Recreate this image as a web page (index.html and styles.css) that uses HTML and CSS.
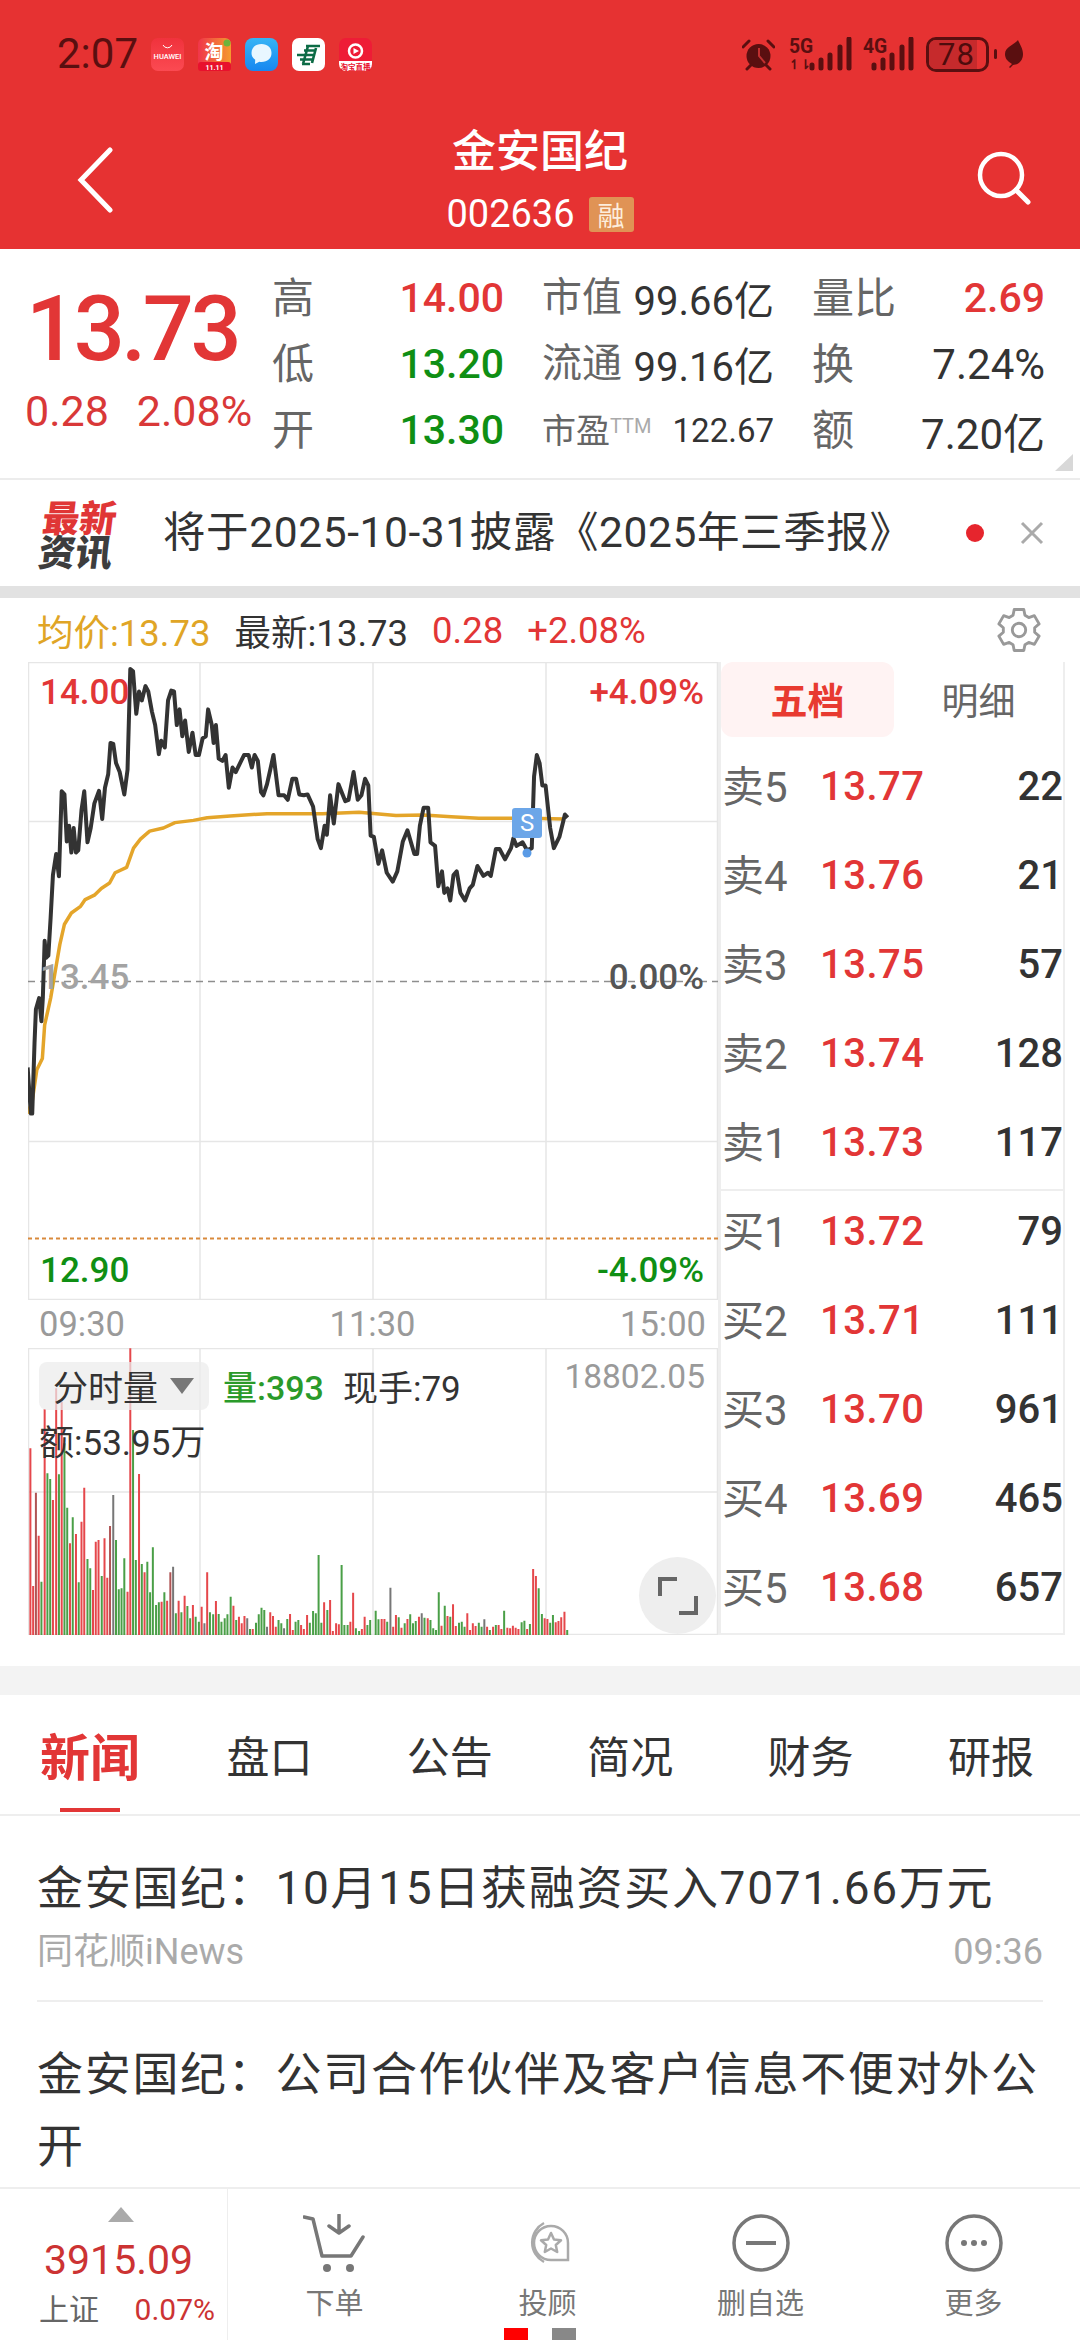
FILE: index.html
```html
<!DOCTYPE html>
<html lang="zh">
<head>
<meta charset="utf-8">
<title>金安国纪</title>
<link rel="stylesheet" href="styles.css">
</head>
<body>
<div class="screen">
  <header class="top">
    <div class="status">
      <span class="time">2:07</span>
      <div class="apps">
        <svg class="app" viewBox="0 0 33 33"><defs><linearGradient id="hw" x1="0" y1="0" x2="0" y2="1"><stop offset="0" stop-color="#f0323c"/><stop offset="1" stop-color="#fb4a52"/></linearGradient></defs><rect width="33" height="33" rx="7" fill="url(#hw)"/><path d="M12 7a5 5 0 0 0 9 0" fill="none" stroke="#fff" stroke-width="1"/><text x="16.5" y="21" class="app-t">HUAWEI</text></svg>
        <svg class="app" viewBox="0 0 33 33"><defs><linearGradient id="tb" x1="0" y1="0" x2="1" y2="0"><stop offset="0" stop-color="#f0354a"/><stop offset="1" stop-color="#f59a2e"/></linearGradient></defs><rect width="33" height="33" rx="6" fill="url(#tb)"/><rect y="24" width="33" height="9" rx="3" fill="#e8112d"/><circle cx="29" cy="5" r="3.5" fill="#6fb33a"/><text x="16" y="21" class="app-tao">淘</text><text x="16.5" y="32" class="app-n">11.11</text></svg>
        <svg class="app" viewBox="0 0 33 33"><defs><linearGradient id="ms" x1="0" y1="0" x2="0" y2="1"><stop offset="0" stop-color="#36b4f5"/><stop offset="1" stop-color="#1787f0"/></linearGradient></defs><rect width="33" height="33" rx="8" fill="url(#ms)"/><path d="M16.500 6c6 0 10 3.700 10 9s-4 9-10 9c-.8 0-1.500-.1-2.200-.2L10 26l.2-4.300C7.600 20 6.500 17.800 6.500 15c0-5.300 4-9 10-9z" fill="#e8f7ff"/></svg>
        <svg class="app" viewBox="0 0 33 33"><rect width="33" height="33" rx="7" fill="#fff"/><path d="M14 8h14M12 12.500h12M5 17h18M8 21.500h14M10 26h8M16 8l-5 18M24 10l-4 15" fill="none" stroke="#0c6b45" stroke-width="2.600"/></svg>
        <svg class="app" viewBox="0 0 33 33"><rect width="33" height="33" rx="7" fill="#ee1c36"/><path d="M0 23h33v3a7 7 0 0 1-7 7H7a7 7 0 0 1-7-7z" fill="#fff"/><circle cx="16.500" cy="13" r="6.500" fill="none" stroke="#fff" stroke-width="2.500"/><path d="M14.500 10l5.500 3-5.500 3z" fill="#fff"/><text x="16.500" y="31.500" class="app-z">淘宝直播</text></svg>
      </div>
      <div class="sys">
        <svg class="s-alarm" viewBox="0 0 33 33"><circle cx="16.500" cy="18" r="12" fill="#5a0f10"/><path d="M17 10v8l6 7" fill="none" stroke="#c03030" stroke-width="2"/><path d="M1 9l6-6M32 9l-6-6M5 31l4-4M28 31l-4-4" stroke="#5a0f10" stroke-width="3" stroke-linecap="round"/></svg>
        <div class="net">
          <svg class="bars" viewBox="0 0 43 34"><path d="M3 31v-3M12 31v-8M21 31V18M31 31V10M40 31V2" stroke="#5a0f10" stroke-width="5" stroke-linecap="round"/></svg>
          <span class="net-t">5G</span><span class="net-s">↿⇂</span>
        </div>
        <div class="net net-4">
          <svg class="bars" viewBox="0 0 43 34"><path d="M3 31v-3M12 31v-8M21 31V18M31 31V10M40 31V2" stroke="#5a0f10" stroke-width="5" stroke-linecap="round"/></svg>
          <span class="net-t">4G</span>
        </div>
        <div class="bat"><span class="bat-fill"></span><span class="bat-n">78</span></div>
        <span class="bat-tip"></span>
        <svg class="leaf" viewBox="0 0 18 28"><path d="M13 0C14 3 18 8 18 14c0 8-6 11-10 11l-3 3-1-1 3-3C2 21 0 18 0 14 0 7 9 5 13 0z" fill="#5a0f10"/></svg>
      </div>
    </div>
    <div class="nav">
      <div class="nav-side">
        <svg class="back" viewBox="0 0 36 66"><path d="M33 3L4 33l29 30" fill="none" stroke="#fff" stroke-width="5" stroke-linecap="round"/></svg>
      </div>
      <div class="nav-mid">
        <div class="title">金安国纪</div>
        <div class="code-row"><span class="code">002636</span><span class="rong">融</span></div>
      </div>
      <div class="nav-side nav-right">
        <svg class="search" viewBox="0 0 54 54"><circle cx="24" cy="24" r="21" fill="none" stroke="#fff" stroke-width="4.500"/><path d="M39 39l12 12" stroke="#fff" stroke-width="5" stroke-linecap="round"/></svg>
      </div>
    </div>
  </header>

  <section class="quote">
    <div class="last">
      <div class="last-price">13.73</div>
      <div class="last-chg"><span>0.28</span><span>2.08%</span></div>
    </div>
    <div class="stats">
      <div class="cell"><span class="k">高</span><b class="up">14.00</b></div>
      <div class="cell"><span class="k k2">市值</span><b class="dark">99.66亿</b></div>
      <div class="cell"><span class="k">量比</span><b class="up">2.69</b></div>
      <div class="cell"><span class="k">低</span><b class="down">13.20</b></div>
      <div class="cell"><span class="k k2">流通</span><b class="dark">99.16亿</b></div>
      <div class="cell"><span class="k">换</span><b class="dark wide">7.24%</b></div>
      <div class="cell"><span class="k">开</span><b class="down">13.30</b></div>
      <div class="cell"><span class="k k3">市盈<sup class="ttm">TTM</sup></span><b class="dark small">122.67</b></div>
      <div class="cell"><span class="k">额</span><b class="dark wide">7.20亿</b></div>
    </div>
    <span class="corner"></span>
  </section>

  <section class="ticker">
    <div class="tk-logo"><span class="tk-a">最新</span><span class="tk-b">资讯</span></div>
    <div class="tk-text">将于2025-10-31披露《2025年三季报》</div>
    <span class="tk-dot"></span>
    <svg class="tk-x" viewBox="0 0 24 24"><path d="M2 2l20 20M22 2L2 22" stroke="#aaa" stroke-width="3"/></svg>
  </section>
  <div class="band"></div>

  <div class="legend">
    <span class="avg">均价:13.73</span>
    <span class="cur">最新:13.73</span>
    <span class="up">0.28</span>
    <span class="up">+2.08%</span>
    <svg class="gear" viewBox="0 0 48 48"><path d="M17.800 8.700L19 2.600h10l1.200 6.100 3.950 2.300L40 9l5 8.600-4.650 4.100v4.600L45 30.400 40 39l-5.850-2-3.950 2.300L29 45.400H19l-1.200-6.100-3.950-2.300L8 39l-5-8.600 4.650-4.100v-4.600L3 17.600 8 9l5.850 2z" fill="none" stroke="#999" stroke-width="3" stroke-linejoin="round"/><circle cx="24" cy="24" r="7" fill="none" stroke="#999" stroke-width="3"/></svg>
  </div>

  <div class="market">
    <div class="charts">
      <div class="price-chart">
        <svg class="plot" viewBox="28 662 690 638" preserveAspectRatio="none">
          <path class="grid" d="M28 662.500H718M28 821.500H718M28 1141.500H718M28 1299.500H718M28.500 662V1300M200 662V1300M373 662V1300M546 662V1300M717.500 662V1300"/>
          <path class="dash" d="M28 981.500H718"/>
          <path class="limit" d="M28 1238.500H718"/>
          <g transform="translate(0 640) scale(.4604 .4476)">
            <polyline class="avgline" points="60,1058 70,1030 80,960 92,935 97,860 110,800 120,740 130,680 140,635 155,610 175,595 185,580 205,570 220,555 238,543 250,520 275,508 290,465 305,445 325,427 355,420 380,408 420,403 450,397 500,393 580,388 700,388 780,385 860,392 920,391 980,395 1040,398 1150,398 1225,400"/>
            <polyline class="priceline" points="60,955 67,1058 70,1058 75,900 78,825 85,800 90,852 93,800 97,672 100,710 105,705 110,620 115,525 122,478 128,528 134,338 140,345 145,450 150,415 155,475 160,420 165,475 170,470 177,380 183,338 190,452 197,420 205,365 215,337 222,400 228,330 235,300 240,230 246,232 252,275 260,295 270,345 277,290 283,65 289,70 296,165 302,115 308,135 316,103 322,115 330,160 337,190 345,255 350,225 358,240 365,135 372,113 378,115 384,190 390,155 396,215 402,180 410,250 418,207 425,257 432,257 440,220 447,215 452,155 460,190 464,230 469,190 475,265 483,270 490,257 497,330 505,285 512,295 530,257 540,257 547,285 553,257 560,270 567,340 572,347 580,322 587,290 594,257 605,347 617,347 625,357 635,310 643,310 650,345 660,347 668,345 680,372 690,445 697,465 705,415 710,435 717,347 725,410 735,322 750,360 757,357 768,295 777,357 785,347 793,310 800,325 805,437 812,440 822,500 830,470 840,520 853,540 863,517 875,450 885,425 900,478 906,478 912,415 920,375 930,375 935,452 945,460 952,550 960,517 965,565 972,555 978,582 985,525 992,517 1000,565 1010,582 1020,555 1027,547 1037,505 1050,527 1060,520 1066,527 1077,467 1085,467 1097,490 1110,465 1115,443 1122,460 1135,452 1145,470 1155,465 1160,305 1166,257 1172,275 1178,325 1185,325 1195,420 1203,465 1215,440 1227,390 1233,397"/>
          </g>
          <circle cx="527" cy="853" r="4.500" fill="#5a9be6"/>
        </svg>
        <span class="tag tag-l t1 up">14.00</span>
        <span class="tag tag-r t1 up">+4.09%</span>
        <span class="tag tag-l t2 mid">13.45</span>
        <span class="tag tag-r t2 mid2">0.00%</span>
        <span class="tag tag-l t3 down">12.90</span>
        <span class="tag tag-r t3 down">-4.09%</span>
        <span class="sflag">S</span>
      </div>
      <div class="axis"><span>09:30</span><span>11:30</span><span>15:00</span></div>
      <div class="vol-chart">
        <svg class="plot" viewBox="28 1348 690 287" preserveAspectRatio="none">
          <path class="grid" d="M28 1348.500H718M28 1492H718M28 1634.500H718M28.500 1348V1635M200 1348V1635M373 1348V1635M546 1348V1635M717.500 1348V1635"/>
          <g transform="translate(0 1330) scale(.4604 .3333)">
            <path class="b-r" d="M66 355V915M72 768V915M84 617V915M97 237V915M115 510V915M122 175V915M134 215V915M152 640V915M165 612V915M177 575V915M183 473V915M202 780V915M208 635V915M214 630V915M227 625V915M233 743V915M277 785V915M283 55V915M302 432V915M314 727V915M351 815V915M363 812V915M388 812V915M401 797V915M419 825V915M438 830V915M450 727V915M469 813V915M507 827V915M519 860V915M525 880V915M531 858V915M549 897V915M587 847V915M593 858V915M599 890V915M630 852V915M636 900V915M654 885V915M660 897V915M667 855V915M704 817V915M717 810V915M723 903V915M730 880V915M736 883V915M761 875V915M767 788V915M786 897V915M792 860V915M829 867V915M835 867V915M854 890V915M860 855V915M872 893V915M885 867V915M910 860V915M929 865V915M959 887V915M972 858V915M984 823V915M990 888V915M1015 850V915M1021 900V915M1027 880V915M1033 888V915M1058 890V915M1071 890V915M1083 885V915M1089 897V915M1102 893V915M1108 895V915M1114 887V915M1120 893V915M1126 897V915M1145 897V915M1158 717V915M1164 738V915M1183 865V915M1189 867V915M1207 877V915M1213 873V915M1219 862V915M1226 845V915"/>
            <path class="b-dr" d="M78 488V915M239 588V915M370 727V915"/>
            <path class="b-g" d="M90 755V915M103 430V915M109 447V915M128 433V915M140 340V915M146 533V915M158 562V915M171 757V915M190 687V915M196 715V915M221 738V915M252 630V915M258 778V915M264 775V915M270 685V915M289 300V915M295 690V915M308 702V915M320 695V915M326 787V915M332 652V915M339 825V915M345 817V915M357 787V915M382 850V915M394 847V915M407 828V915M413 865V915M425 860V915M432 875V915M456 847V915M463 853V915M475 852V915M481 875V915M488 865V915M494 853V915M501 800V915M513 870V915M543 897V915M556 878V915M562 853V915M568 833V915M574 840V915M605 870V915M611 880V915M624 867V915M642 875V915M648 870V915M673 878V915M680 843V915M686 850V915M692 675V915M698 878V915M711 840V915M742 705V915M748 885V915M755 885V915M773 895V915M780 903V915M798 885V915M804 870V915M816 842V915M822 868V915M841 875V915M866 862V915M879 880V915M891 853V915M897 880V915M903 873V915M922 863V915M935 870V915M941 895V915M947 900V915M953 787V915M966 827V915M978 860V915M997 878V915M1003 875V915M1009 890V915M1040 878V915M1046 890V915M1064 900V915M1077 885V915M1095 842V915M1133 877V915M1139 872V915M1151 882V915M1170 775V915M1177 852V915M1195 878V915M1201 855V915M1232 900V915"/>
            <path class="b-n" d="M246 495V915M376 710V915M444 880V915M537 865V915M580 890V915M617 895V915M848 773V915M916 850V915M1052 868V915"/>
          </g>
        </svg>
        <div class="vol-info">
          <div class="vol-line">
            <span class="sel">分时量<i class="sel-tri"></i></span>
            <span class="vol-g">量:393</span>
            <span class="vol-d">现手:79</span>
          </div>
          <div class="vol-amt">额:53.95万</div>
        </div>
        <span class="vol-max">18802.05</span>
        <span class="expand"><svg viewBox="0 0 40 40"><path d="M2 20V3h17M38 20v17H21" fill="none" stroke="#666" stroke-width="4"/></svg></span>
      </div>
    </div>

    <aside class="side">
      <div class="side-tabs"><span class="st-on">五档</span><span class="st-off">明细</span></div>
      <div class="levels">
        <div class="lv"><span class="lv-k">卖5</span><span class="lv-p">13.77</span><span class="lv-v">22</span></div>
        <div class="lv"><span class="lv-k">卖4</span><span class="lv-p">13.76</span><span class="lv-v">21</span></div>
        <div class="lv"><span class="lv-k">卖3</span><span class="lv-p">13.75</span><span class="lv-v">57</span></div>
        <div class="lv"><span class="lv-k">卖2</span><span class="lv-p">13.74</span><span class="lv-v">128</span></div>
        <div class="lv"><span class="lv-k">卖1</span><span class="lv-p">13.73</span><span class="lv-v">117</span></div>
      </div>
      <div class="levels levels-buy">
        <div class="lv"><span class="lv-k">买1</span><span class="lv-p">13.72</span><span class="lv-v">79</span></div>
        <div class="lv"><span class="lv-k">买2</span><span class="lv-p">13.71</span><span class="lv-v">111</span></div>
        <div class="lv"><span class="lv-k">买3</span><span class="lv-p">13.70</span><span class="lv-v">961</span></div>
        <div class="lv"><span class="lv-k">买4</span><span class="lv-p">13.69</span><span class="lv-v">465</span></div>
        <div class="lv"><span class="lv-k">买5</span><span class="lv-p">13.68</span><span class="lv-v">657</span></div>
      </div>
    </aside>
  </div>

  <nav class="tabs">
    <span class="tab tab-on">新闻</span>
    <span class="tab">盘口</span>
    <span class="tab">公告</span>
    <span class="tab">简况</span>
    <span class="tab">财务</span>
    <span class="tab">研报</span>
  </nav>

  <div class="feed">
    <article class="item">
      <h3 class="item-t">金安国纪&#65306;10月15日获融资买入7071.66万元</h3>
      <div class="item-m"><span>同花顺iNews</span><span>09:36</span></div>
    </article>
    <article class="item item-2">
      <h3 class="item-t">金安国纪&#65306;公司合作伙伴及客户信息不便对外公开</h3>
    </article>
  </div>

  <footer class="foot">
    <div class="idx">
      <i class="idx-tri"></i>
      <div class="idx-v">3915.09</div>
      <div class="idx-b"><span class="idx-n">上证</span><span class="idx-p">0.07%</span></div>
    </div>
    <div class="act">
      <svg class="act-i" viewBox="0 0 64 60"><path d="M1 3l9 2 9 37h29l12-19M36 1v18M26 12l10 7 10-7" fill="none" stroke="#777" stroke-width="3.500" stroke-linecap="round" stroke-linejoin="round"/><circle cx="24" cy="54" r="4" fill="#777"/><circle cx="47" cy="54" r="4" fill="#777"/></svg>
      <span>下单</span>
    </div>
    <div class="act">
      <svg class="act-i" viewBox="0 0 64 60"><path d="M35 12A17 17 0 0 0 35 46H52V29A17 17 0 0 0 35 12zM28 9A22 22 0 0 0 28 48" fill="none" stroke="#aaa" stroke-width="2.500"/><path d="M35 19l3 6.500 7 .8-5.200 4.700 1.400 7-6.200-3.500-6.200 3.500 1.400-7-5.200-4.700 7-.8z" fill="none" stroke="#aaa" stroke-width="2.500" stroke-linejoin="round"/></svg>
      <span>投顾</span>
    </div>
    <div class="act">
      <svg class="act-i" viewBox="0 0 64 60"><circle cx="32" cy="29" r="27" fill="none" stroke="#777" stroke-width="3.500"/><path d="M17 29h30" stroke="#777" stroke-width="4"/></svg>
      <span>删自选</span>
    </div>
    <div class="act">
      <svg class="act-i" viewBox="0 0 64 60"><circle cx="32" cy="29" r="27" fill="none" stroke="#777" stroke-width="3.500"/><circle cx="22" cy="29" r="3" fill="#777"/><circle cx="32" cy="29" r="3" fill="#777"/><circle cx="42" cy="29" r="3" fill="#777"/></svg>
      <span>更多</span>
    </div>
    <div class="pager"><i class="pg-on"></i><i class="pg-off"></i></div>
  </footer>
</div>
</body>
</html>
```
FILE: styles.css
```css
* { box-sizing: border-box; }
html, body { margin: 0; padding: 0; background: #fff; }
body { font-family: Roboto, "Noto Sans CJK SC", sans-serif; color: #333; }
.screen { width: 1080px; height: 2340px; display: flex; flex-direction: column; overflow: hidden; background: #fff; position: relative; }
.up { color: #e23636; }
.down { color: #0f8f14; }
.dark { color: #333; }

/* header */
.top { height: 249px; background: #e63232; flex: none; }
.status { height: 108px; display: flex; align-items: center; padding: 0 57px 0 57px; }
.time { font-size: 42px; color: #5a0f10; width: 94px; line-height: 1; }
.apps { display: flex; gap: 14px; }
.app { width: 33px; height: 33px; display: block; }
.app-t { font: 500 7.500px Roboto, sans-serif; fill: #fff; text-anchor: middle; }
.app-tao { font: 700 19px "Noto Sans CJK SC", sans-serif; fill: #fff; text-anchor: middle; }
.app-n { font: 700 7px Roboto, sans-serif; fill: #fff; text-anchor: middle; }
.app-z { font: 700 7.500px "Noto Sans CJK SC", sans-serif; fill: #e8112d; text-anchor: middle; }
.sys { margin-left: auto; display: flex; align-items: center; }
.s-alarm { width: 33px; height: 33px; display: block; margin-right: 14px; }
.net { width: 63px; height: 34px; position: relative; margin-right: 11px; }
.net-4 { width: 51px; margin-right: 12px; }
.net-t { position: absolute; left: 0; top: -1px; font: 700 21px/20px Roboto, sans-serif; color: #5a0f10; transform: scaleX(.92); transform-origin: left; }
.net-s { position: absolute; left: 0; top: 20px; font: 700 13px/15px Roboto, sans-serif; color: #5a0f10; }
.bars { position: absolute; right: 0; top: 0; width: 43px; height: 34px; }
.bat { width: 63px; height: 35px; border: 3px solid #5a0f10; border-radius: 10px; position: relative; display: flex; align-items: center; justify-content: center; overflow: hidden; }
.bat-fill { position: absolute; left: 0; top: 0; bottom: 0; width: 48px; background: #c62a2c; }
.bat-n { position: relative; font-size: 31px; line-height: 1; color: #4d0c0d; margin-right: 2px; letter-spacing: 1px; }
.bat-tip { width: 3px; height: 10px; background: #5a0f10; border-radius: 2px; margin: 0 8px 0 5px; }
.leaf { width: 18px; height: 28px; display: block; }

.nav { height: 141px; display: flex; }
.nav-side { width: 440px; flex: none; padding: 39px 0 0 77px; }
.nav-right { padding: 43px 49px 0 0; display: flex; justify-content: flex-end; }
.back { width: 36px; height: 66px; display: block; }
.search { width: 54px; height: 54px; display: block; }
.nav-mid { width: 200px; display: flex; flex-direction: column; align-items: center; }
.title { font: 500 44px/62px "Noto Sans CJK SC", sans-serif; color: #fff; margin-top: 9px; white-space: nowrap; }
.code-row { display: flex; align-items: center; gap: 14px; margin-top: 17px; white-space: nowrap; }
.code { font-size: 38px; line-height: 36px; color: #fff; }
.rong { width: 45px; height: 35px; background: #e09355; border-radius: 3px; color: #fdeedd; font: 400 27px/35px "Noto Sans CJK SC", sans-serif; text-align: center; }

/* quote */
.quote { height: 229px; display: flex; position: relative; flex: none; }
.last { width: 272px; padding: 36px 0 0 28px; }
.last-price { font-size: 90px; font-weight: 500; color: #e23636; line-height: 90px; letter-spacing: -3.500px; margin-left: -2px; }
.last-chg { display: flex; gap: 28px; font-size: 43px; line-height: 46px; color: #d93838; margin: 13px 0 0 -3px; white-space: nowrap; }
.stats { display: grid; grid-template-columns: 232px 232px 233px; column-gap: 38px; grid-auto-rows: 66px; padding-top: 16px; }
.cell { display: flex; justify-content: space-between; align-items: center; white-space: nowrap; }
.cell b { font-size: 41px; font-weight: 500; }
.cell:nth-child(3n+2) b { font-size: 40px; font-weight: 400; }
.cell b.wide { font-size: 42px; font-weight: 400; }
.cell:nth-child(8) b.small { font-size: 33px; font-weight: 400; }
.k { font-size: 42px; color: #666; font-family: "Noto Sans CJK SC", sans-serif; margin-top: -8px; }
.k2 { font-size: 40px; }
.k3 { font-size: 34px; margin-top: -4px; }
.ttm { font-size: 20px; color: #aaa; vertical-align: 10px; line-height: 0; font-family: Roboto, sans-serif; }
.corner { position: absolute; right: 7px; bottom: 7px; width: 0; height: 0; border-style: solid; border-width: 0 0 17px 18px; border-color: transparent transparent #d8d8d8 transparent; }

/* ticker */
.ticker { height: 108px; border-top: 2px solid #ececec; display: flex; align-items: center; padding: 0 36px 0 41px; flex: none; }
.tk-logo { width: 78px; display: flex; flex-direction: column; gap: 2px; font: 900 37px/32px "Noto Sans CJK SC", sans-serif; transform: skewX(-7deg); }
.tk-a { color: #e03636; }
.tk-b { color: #3d3d3d; }
.tk-text { margin-left: 44px; font-size: 42.500px; letter-spacing: .6px; color: #333; white-space: nowrap; line-height: 1; flex: 1; }
.tk-dot { width: 18px; height: 18px; border-radius: 50%; background: #e6252d; margin-right: 36px; }
.tk-x { width: 24px; height: 24px; display: block; }
.band { height: 12px; background: #e2e2e2; flex: none; }

/* legend */
.legend { height: 64px; display: flex; align-items: center; padding: 0 38px 0 37px; font-size: 36.500px; white-space: nowrap; flex: none; }
.legend span { margin-right: 24px; }
.avg { color: #e0a526; }
.cur { color: #333; }
.gear { width: 46px; height: 46px; display: block; margin-left: auto; }

/* market */
.market { display: flex; height: 1004px; padding-left: 28px; flex: none; }
.charts { width: 690px; flex: none; }
.price-chart { position: relative; height: 638px; }
.plot { display: block; width: 100%; height: 100%; }
.grid { fill: none; stroke: #e6e6e6; stroke-width: 1.500; }
.dash { fill: none; stroke: #8e8e8e; stroke-width: 1.500; stroke-dasharray: 7 5; }
.limit { fill: none; stroke: #d98a3c; stroke-width: 2; stroke-dasharray: 4 3; }
.priceline { fill: none; stroke: #333; stroke-width: 4; stroke-linejoin: round; vector-effect: non-scaling-stroke; }
.avgline { fill: none; stroke: #e4a52a; stroke-width: 3.500; stroke-linejoin: round; vector-effect: non-scaling-stroke; }
.tag { position: absolute; font-size: 35px; line-height: 40px; font-weight: 500; white-space: nowrap; }
.tag-l { left: 12px; }
.tag-r { right: 14px; }
.t1 { top: 11px; }
.t2 { top: 296px; }
.t3 { top: 589px; }
.mid { color: #a3a3a3; }
.mid2 { color: #555; }
.sflag { position: absolute; left: 484px; top: 146px; width: 30px; height: 30px; border-radius: 3px; background: #6ca6e8; color: #fff; font-size: 24px; line-height: 30px; text-align: center; }
.axis { height: 48px; display: flex; justify-content: space-between; align-items: center; padding: 0 12px 0 11px; font-size: 34.500px; color: #9a9a9a; }
.vol-chart { position: relative; height: 287px; }
.b-r, .b-dr, .b-g, .b-n { fill: none; stroke-width: 2; vector-effect: non-scaling-stroke; }
.b-r { stroke: #e5474b; }
.b-dr { stroke: #b05454; }
.b-g { stroke: #4a9f47; }
.b-n { stroke: #777; }
.vol-info { position: absolute; left: 11px; top: 12px; font-size: 35px; white-space: nowrap; }
.vol-line { display: flex; align-items: center; }
.sel { width: 170px; height: 48px; background: rgba(235, 235, 235, .72); border-radius: 8px; display: flex; align-items: center; padding-left: 14px; color: #333; font-size: 35px; }
.sel-tri { width: 0; height: 0; border-style: solid; border-width: 16px 12px 0 12px; border-color: #777 transparent transparent transparent; margin-left: 12px; }
.vol-g { color: #2a9a2a; margin-left: 14px; font-weight: 500; font-size: 34px; }
.vol-d { color: #333; margin-left: 19px; }
.vol-amt { margin: 13px 0 0 0; color: #333; line-height: 40px; }
.vol-max { position: absolute; right: 13px; top: 9px; color: #9a9a9a; font-size: 33.500px; line-height: 40px; }
.expand { position: absolute; left: 611px; top: 209px; width: 77px; height: 77px; border-radius: 50%; background: #eeeeee; display: flex; align-items: center; justify-content: center; }
.expand svg { width: 40px; height: 40px; display: block; }

/* order book */
.side { width: 347px; height: 973px; border-left: 3px solid #eee; border-right: 2px solid #eee; border-bottom: 2px solid #eee; flex: none; }
.side-tabs { display: flex; height: 75px; align-items: stretch; margin-bottom: 5px; }
.st-on { width: 173px; background: #fff3f3; border-radius: 12px; color: #e83a30; font: 700 37px/75px "Noto Sans CJK SC", sans-serif; text-align: center; }
.st-off { flex: 1; color: #666; font: 400 37px/75px "Noto Sans CJK SC", sans-serif; text-align: center; }
.levels { position: relative; }
.levels-buy::before { content: ""; position: absolute; left: 0; right: 0; top: 2px; height: 2px; background: #eee; }
.lv { height: 89px; display: grid; grid-template-columns: 97px 1fr auto; align-items: center; padding: 0 0 0 2px; white-space: nowrap; font-size: 40px; }
.lv-k { color: #666; font-size: 42px; margin-top: -6px; margin-left: -1px; }
.lv-p { color: #e23636; font-weight: 500; letter-spacing: .5px; }
.lv-v { color: #333; font-weight: 500; }

/* tabs */
.tabs { height: 121px; margin-top: 29px; border-bottom: 2px solid #eee; display: flex; justify-content: space-between; align-items: center; padding: 0 46px 0 40px; flex: none; box-shadow: 0 -29px 0 0 #f3f3f3; }
.tab { font: 400 43px/60px "Noto Sans CJK SC", sans-serif; color: #333; position: relative; margin-top: -2px; }
.tab-on { font-size: 50px; font-weight: 700; color: #e23636; margin-right: -8px; }
.tab-on::after { content: ""; position: absolute; left: 20px; width: 60px; height: 4px; background: #e23636; bottom: -28px; }

/* feed */
.feed { flex: 1; min-height: 0; padding: 0 37px; overflow: hidden; }
.item { height: 186px; border-bottom: 2px solid #eee; padding-top: 36px; }
.item-2 { border-bottom: 0; padding-top: 36px; }
.item-t { margin: 0; font-size: 46px; font-weight: 400; line-height: 72px; letter-spacing: 1.700px; color: #333; font-family: Roboto, "Noto Sans CJK SC", sans-serif; }
.item-m { display: flex; justify-content: space-between; font-size: 36px; color: #aaa; margin-top: 8px; line-height: 40px; }

/* footer */
.foot { height: 153px; border-top: 2px solid #eee; display: flex; flex: none; position: relative; background: #fff; }
.idx { width: 228px; border-right: 1px solid #eee; display: flex; flex-direction: column; position: relative; padding: 18px 0 0 0; }
.idx-tri { width: 0; height: 0; border-style: solid; border-width: 0 13px 15px 13px; border-color: transparent transparent #aaa transparent; margin-left: 108px; }
.idx-v { font-size: 41px; line-height: 46px; color: #cc3333; margin: 15px 0 0 44px; }
.idx-b { display: flex; justify-content: space-between; padding: 0 12px 0 39px; margin-top: 9px; font-size: 30px; line-height: 36px; }
.idx-n { color: #666; }
.idx-p { color: #cc3333; }
.act { flex: 1; display: flex; flex-direction: column; align-items: center; padding-top: 25px; color: #777; font-size: 29px; line-height: 40px; }
.act-i { width: 64px; height: 60px; display: block; margin-bottom: 10px; flex: none; }
.pager { position: absolute; left: 504px; bottom: 0; display: flex; gap: 24px; }
.pg-on, .pg-off { display: block; width: 24px; height: 12px; }
.pg-on { background: #ff0000; }
.pg-off { background: #888; }
```
